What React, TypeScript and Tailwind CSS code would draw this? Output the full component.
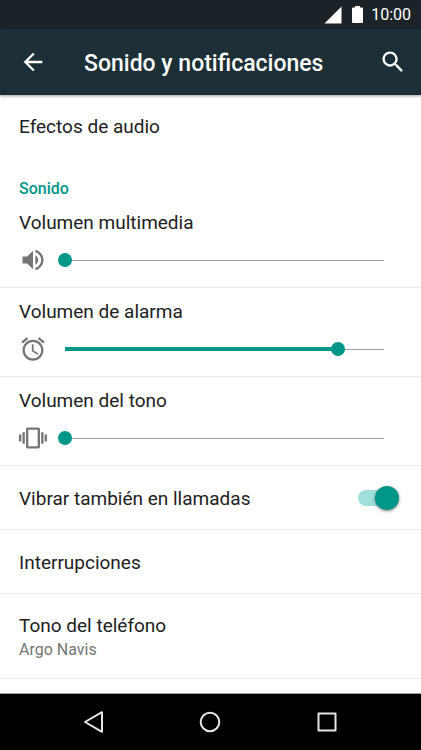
import { useState, type ReactNode } from "react";

interface VolumeRowProps {
  id: string;
  label: string;
  max: number;
  initial: number;
  icon: ReactNode;
}

const ICONS = {
  back: "M20 11H7.83l5.59-5.59L12 4l-8 8 8 8 1.41-1.41L7.83 13H20v-2z",
  search:
    "M15.5 14h-.79l-.28-.27C15.41 12.59 16 11.11 16 9.5 16 5.91 13.09 3 9.5 3S3 5.91 3 9.5 5.91 16 9.5 16c1.61 0 3.09-.59 4.23-1.57l.27.28v.79l5 4.99L20.49 19l-4.99-5zm-6 0C7.01 14 5 11.99 5 9.5S7.01 5 9.5 5 14 7.01 14 9.5 11.99 14 9.5 14z",
  volume:
    "M3 9v6h4l5 5V4L7 9H3zm13.5 3c0-1.77-1.02-3.29-2.5-4.03v8.05c1.48-.73 2.5-2.25 2.5-4.02zM14 3.23v2.06c2.89.86 5 3.54 5 6.71s-2.11 5.85-5 6.71v2.06c4.01-.91 7-4.49 7-8.77s-2.99-7.86-7-8.77z",
  alarm:
    "M22 5.72l-4.6-3.86-1.29 1.53 4.6 3.86L22 5.72zM7.88 3.39L6.6 1.86 2 5.71l1.29 1.53 4.59-3.85zM12.5 8H11v6l4.75 2.85.75-1.23-4-2.37V8zM12 4c-4.97 0-9 4.03-9 9s4.02 9 9 9c4.97 0 9-4.03 9-9s-4.03-9-9-9zm0 16c-3.87 0-7-3.13-7-7s3.13-7 7-7 7 3.13 7 7-3.13 7-7 7z",
  vibration:
    "M0 15h2V9H0v6zm3 2h2V7H3v10zm19-8v6h2V9h-2zm-3 8h2V7h-2v10zM16.5 3h-9C6.67 3 6 3.67 6 4.5v15c0 .83.67 1.5 1.5 1.5h9c.83 0 1.5-.67 1.5-1.5v-15c0-.83-.67-1.5-1.5-1.5zM16 19H8V5h8v14z",
};

function Icon({ path }: { path: string }) {
  return (
    <svg viewBox="0 0 24 24" className="size-7 shrink-0 fill-current" aria-hidden="true">
      <path d={path} />
    </svg>
  );
}

function VolumeRow({ id, label, max, initial, icon }: VolumeRowProps) {
  const [value, setValue] = useState(initial);

  return (
    <div className="border-b border-[#ebebeb] pb-[13px]">
      <label htmlFor={id} className="block px-[19px] pt-2.5 text-[19px] leading-7">
        {label}
      </label>
      <div className="mt-[9px] flex items-center gap-[11px] pr-[30px] pl-[19px] text-[#757575]">
        {icon}
        <div className="relative flex h-7 flex-1 items-center">
          <div className="absolute inset-x-[7px] flex h-1 items-center">
            <div className="h-px w-full bg-[#9e9e9e]" />
            <div
              className="absolute left-0 h-1 bg-[#009688]"
              style={{ width: `${(value / max) * 100}%` }}
            />
          </div>
          <input
            id={id}
            type="range"
            min={0}
            max={max}
            value={value}
            onChange={(e) => setValue(Number(e.target.value))}
            className="relative h-7 w-full cursor-pointer appearance-none bg-transparent [&::-webkit-slider-thumb]:size-3.5 [&::-webkit-slider-thumb]:appearance-none [&::-webkit-slider-thumb]:rounded-full [&::-webkit-slider-thumb]:bg-[#009688]"
          />
        </div>
      </div>
    </div>
  );
}

export default function App() {
  const [vibrate, setVibrate] = useState(true);

  return (
    <div className="flex min-h-screen flex-col bg-white font-[Roboto,sans-serif] text-[#212121]">
      <div className="flex h-[29px] items-center justify-end bg-[#1b2328] pt-px pr-2.5 text-white">
        <svg viewBox="0 0 18 18" className="mr-2.5 size-[18px] fill-current" aria-hidden="true">
          <path d="M17.5 0.5v17H0.5z" />
        </svg>
        <svg viewBox="0 0 11 18" className="mr-2 h-[18px] w-[11px] fill-current" aria-hidden="true">
          <path d="M3 0h5v1.6h2q1 0 1 1v13.4q0 1-1 1H1q-1 0-1-1V2.6q0-1 1-1h2z" />
        </svg>
        <span className="text-base">10:00</span>
      </div>

      <header className="z-10 flex h-[66px] items-center bg-[#1d2f36] pr-3.5 pl-[19px] text-white shadow-[0_1px_3px_rgba(0,0,0,0.4)]">
        <button type="button" aria-label="Atrás">
          <Icon path={ICONS.back} />
        </button>
        <h1 className="ml-[37px] flex-1 pt-1 text-[23px] leading-8 font-medium">
          Sonido y notificaciones
        </h1>
        <button type="button" aria-label="Buscar">
          <Icon path={ICONS.search} />
        </button>
      </header>

      <main className="flex-1">
        <button type="button" className="block h-16 w-full px-[19px] text-left text-[19px]">
          Efectos de audio
        </button>

        <section>
          <h2 className="px-[19px] pt-[18px] text-base leading-6 font-medium text-[#009688]">
            Sonido
          </h2>
          <div className="-mt-0.5">
            <VolumeRow
              id="media"
              label="Volumen multimedia"
              max={15}
              initial={0}
              icon={<Icon path={ICONS.volume} />}
            />
          </div>
          <VolumeRow
            id="alarm"
            label="Volumen de alarma"
            max={7}
            initial={6}
            icon={<Icon path={ICONS.alarm} />}
          />
          <VolumeRow
            id="ring"
            label="Volumen del tono"
            max={7}
            initial={0}
            icon={<Icon path={ICONS.vibration} />}
          />

          <label className="flex h-16 cursor-pointer items-center justify-between border-b border-[#ebebeb] pr-[22px] pl-[19px] text-[19px]">
            <span className="pt-1">Vibrar también en llamadas</span>
            <span className="relative flex h-6 w-[41px] items-center">
              <input
                type="checkbox"
                role="switch"
                checked={vibrate}
                onChange={(e) => setVibrate(e.target.checked)}
                className="peer sr-only"
              />
              <span className="h-4 w-9 rounded-full bg-[#bdbdbd] peer-checked:bg-[#9fe0da]" />
              <span className="absolute left-0 size-6 rounded-full bg-[#f1f1f1] shadow-[0_1px_3px_rgba(0,0,0,0.5)] peer-checked:right-0 peer-checked:left-auto peer-checked:bg-[#009688]" />
            </span>
          </label>

          <button
            type="button"
            className="block h-16 w-full border-b border-[#ebebeb] px-[19px] pt-1 text-left text-[19px]"
          >
            Interrupciones
          </button>

          <button
            type="button"
            className="block w-full border-b border-[#ebebeb] px-[19px] pt-[18px] pb-[18px] text-left"
          >
            <span className="block text-[19px] leading-7">Tono del teléfono</span>
            <span className="block text-base leading-5 text-[#757575]">Argo Navis</span>
          </button>
        </section>
      </main>

      <nav className="flex h-[57px] items-center border-t border-[#9e9e9e] bg-black px-9 text-[#e6e6e6]">
        <button type="button" aria-label="Volver" className="flex flex-1 justify-center">
          <svg
            viewBox="0 0 24 24"
            className="size-6 fill-none stroke-current stroke-2"
            strokeLinejoin="round"
          >
            <path d="M20 2.2v19.6L3 12z" />
          </svg>
        </button>
        <button type="button" aria-label="Inicio" className="flex flex-1 justify-center">
          <svg viewBox="0 0 24 24" className="size-6 fill-none stroke-current stroke-2">
            <circle cx="12" cy="12" r="9.3" />
          </svg>
        </button>
        <button type="button" aria-label="Recientes" className="flex flex-1 justify-center">
          <svg
            viewBox="0 0 24 24"
            className="size-6 fill-none stroke-current stroke-2"
            strokeLinejoin="round"
          >
            <path d="M3.5 3.5h17v17h-17z" />
          </svg>
        </button>
      </nav>
    </div>
  );
}
